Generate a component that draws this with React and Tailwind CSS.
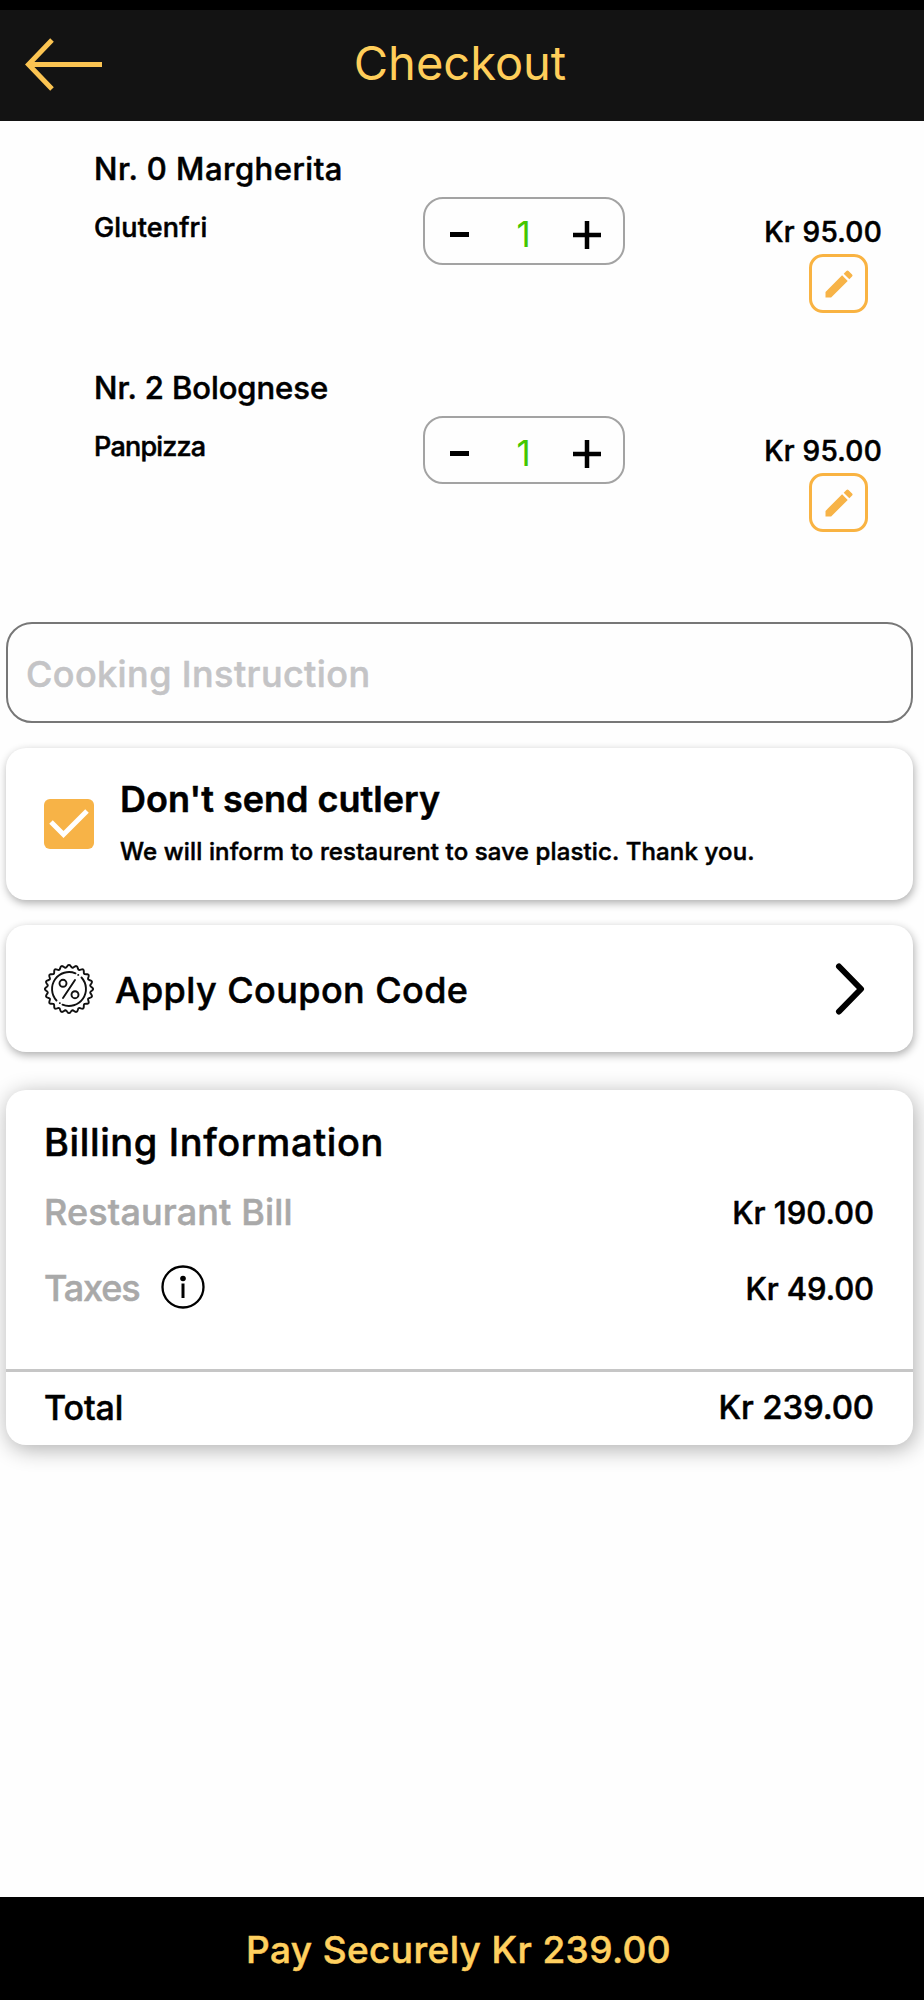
import { useState } from 'react';
import { MdEdit } from 'react-icons/md';

const items = [
  { id: 0, name: 'Nr. 0 Margherita', variant: 'Glutenfri', price: 95, nameTracking: 'tracking-[0.5px]', variantTracking: 'tracking-[0.15px]' },
  { id: 2, name: 'Nr. 2 Bolognese', variant: 'Panpizza', price: 95, nameTracking: 'tracking-[-0.05px]', variantTracking: 'tracking-[-0.8px]' }
];

const formatPrice = (value) => `Kr ${value.toFixed(2)}`;

// Scalloped outline of the coupon badge
const badgePath = () => {
  const points = [];
  for (let i = 0; i <= 240; i++) {
    const angle = (i / 240) * Math.PI * 2 - Math.PI / 2;
    const radius = 22.8 + 1.3 * Math.cos(((i / 240) * Math.PI * 2) * 20);
    points.push(`${(25 + radius * Math.cos(angle)).toFixed(2)} ${(25 + radius * Math.sin(angle)).toFixed(2)}`);
  }
  return `M${points.join('L')}Z`;
};

const CouponIcon = () => (
  <svg width="50" height="50" viewBox="0 0 50 50" fill="none" stroke="#111" strokeWidth="1.9" strokeLinecap="round">
    <path d={badgePath()} strokeLinejoin="round" />
    <path d="M31.5 9.3A17 17 0 0 0 12.5 36.5M18.5 40.7A17 17 0 0 0 37.5 13.5" />
    <path d="M34.2 10.9h.1M15.8 39.1h.1" />
    <path d="M31 16L19 34" />
    <circle cx="19" cy="19.3" r="3.5" />
    <circle cx="31" cy="30.7" r="3.5" />
  </svg>
);

const Header = () => (
  <header className="relative h-[121px] border-t-[10px] border-black bg-[#131313] flex items-center justify-center pb-[6px] pr-[4px]">
    <button className="absolute left-[25px] top-[27px]">
      <svg width="78" height="54" viewBox="0 0 78 54" fill="none" stroke="#fbc452" strokeWidth="5">
        <path d="M77 27.5H4M27 3L3.5 27.5l23.5 24.5" />
      </svg>
    </button>
    <h1 className="text-[47px] leading-[48px] text-[#ffce5a] font-normal [-webkit-text-stroke:0px]">Checkout</h1>
  </header>
);

const OrderItem = ({ item }) => {
  const [count, setCount] = useState(1);

  return (
    <div className="flex h-[219px]">
      <div className="w-[423px] pl-[94px] pt-[28px]">
        <h2 className={`text-[31px] leading-10 font-medium whitespace-nowrap ${item.nameTracking}`}>{item.name}</h2>
        <p className={`mt-[19px] text-[27px] leading-10 font-medium ${item.variantTracking}`}>{item.variant}</p>
      </div>
      <div className="mt-[76px] w-[202px] h-[68px] rounded-[20px] border-2 border-[#a3a3a3] flex items-center">
        <button className="ml-[25px] mt-[7px] w-[19px] h-[5px] bg-black" onClick={() => setCount(Math.max(0, count - 1))} />
        <span className="w-[104px] pl-[5px] pt-[6px] text-center text-[35px] leading-10 text-[#43c600] [-webkit-text-stroke:0px]">{count}</span>
        <button onClick={() => setCount(count + 1)}>
          <svg className="mt-[7px]" width="28" height="28" viewBox="0 0 28 28" stroke="#000" strokeWidth="4.5">
            <path d="M14 0v28M0 14h28" />
          </svg>
        </button>
      </div>
      <div className="ml-auto pr-[42px] pt-[91px] flex flex-col items-end">
        <span className="text-[28px] leading-10 font-medium tracking-[0.25px]">{formatPrice(item.price)}</span>
        <button className="mt-[2px] mr-[14px] w-[59px] h-[59px] rounded-[14px] border-[3px] border-[#f9b342] flex items-center justify-center">
          <MdEdit className="w-9 h-9 text-[#f7b347]" />
        </button>
      </div>
    </div>
  );
};

const Checkout = () => {
  const subtotal = items.reduce((sum, item) => sum + item.price, 0);
  const taxes = 49;
  const total = subtotal + taxes;

  return (
    <div className="w-[924px] h-[2000px] bg-[#fefefe] text-black flex flex-col font-['Inter','Liberation_Sans',sans-serif] [-webkit-text-stroke:0.5px]">
      <Header />

      <div className="h-[501px]">
        {items.map((item) => (
          <OrderItem key={item.id} item={item} />
        ))}
      </div>

      <input
        className="ml-[6px] w-[907px] h-[101px] rounded-[26px] border-2 border-[#777] px-[18px] pt-[2px] text-[36px] font-medium tracking-[0.4px] placeholder:text-[#c4c4c6]"
        placeholder="Cooking Instruction"
      />

      {/* Cutlery */}
      <div className="ml-[6px] mt-[25px] w-[907px] h-[152px] rounded-[20px] bg-white shadow-[1px_3px_9px_rgba(0,0,0,0.32)] flex pl-[38px]">
        <div className="mt-[51px] w-[50px] h-[50px] rounded-[6px] bg-[#f7b347]">
          <svg width="50" height="50" viewBox="0 0 50 50" fill="none" stroke="#fff" strokeWidth="5">
            <path d="M7 23l12.5 12.5L43 12" />
          </svg>
        </div>
        <div className="ml-[26px] pt-[28px]">
          <h3 className="text-[36px] leading-[46px] font-semibold">Don't send cutlery</h3>
          <p className="mt-[10px] text-[24px] leading-[40px] font-medium tracking-[0.14px]">
            We will inform to restaurent to save plastic. Thank you.
          </p>
        </div>
      </div>

      {/* Coupon */}
      <div className="ml-[6px] mt-[25px] w-[907px] h-[127px] rounded-[20px] bg-white shadow-[1px_3px_9px_rgba(0,0,0,0.32)] flex items-center pl-[38px] pr-[48px]">
        <CouponIcon />
        <span className="ml-[21px] pt-[2px] text-[36px] leading-[46px] font-medium tracking-[0.42px]">Apply Coupon Code</span>
        <svg className="ml-auto" width="30" height="52" viewBox="0 0 30 52" fill="none" stroke="#000" strokeWidth="6" strokeLinecap="round" strokeLinejoin="round">
          <path d="M4 3.5L26 26L4 48.5" />
        </svg>
      </div>

      {/* Billing */}
      <div className="ml-[6px] mt-[38px] w-[907px] h-[355px] rounded-[20px] bg-white shadow-[2px_4px_22px_rgba(0,0,0,0.32)] flex flex-col">
        <div className="h-[282px] border-b-[3px] border-[#c6c6c6] pl-[38px] pr-[39px] pt-[28px]">
          <h3 className="text-[38px] leading-[48px] font-medium tracking-[0.62px]">Billing Information</h3>
          <div className="mt-[22px] flex items-center justify-between">
            <span className="text-[36px] leading-[48px] font-medium tracking-[0.15px] text-[#a9a9a9]">Restaurant Bill</span>
            <span className="text-[31px] pt-[2px] font-medium">{formatPrice(subtotal)}</span>
          </div>
          <div className="mt-[27px] flex items-center">
            <span className="text-[36px] leading-[48px] font-medium tracking-[-1.1px] text-[#a9a9a9]">Taxes</span>
            <svg className="ml-[21px] mb-[1px]" width="44" height="44" viewBox="0 0 44 44" fill="none" stroke="#000">
              <circle cx="22" cy="22" r="20.5" strokeWidth="2.3" />
              <circle cx="22" cy="13.5" r="2.8" fill="#000" stroke="none" />
              <path d="M22 18.5v14.5" strokeWidth="3" />
            </svg>
            <span className="ml-auto pt-[2px] text-[31px] font-medium tracking-[-0.1px]">{formatPrice(taxes)}</span>
          </div>
        </div>
        <div className="flex-1 pl-[38px] pr-[39px] pb-[2px] flex items-center justify-between">
          <span className="text-[34px] font-medium tracking-[-0.1px]">Total</span>
          <span className="text-[33px] font-medium tracking-[-0.15px]">{formatPrice(total)}</span>
        </div>
      </div>

      <button className="mt-auto h-[103px] pr-[7px] pt-[2px] bg-black text-[#ffd05f] text-[37px] font-medium tracking-[0.4px]">
        Pay Securely {formatPrice(total)}
      </button>
    </div>
  );
};

export default Checkout;
